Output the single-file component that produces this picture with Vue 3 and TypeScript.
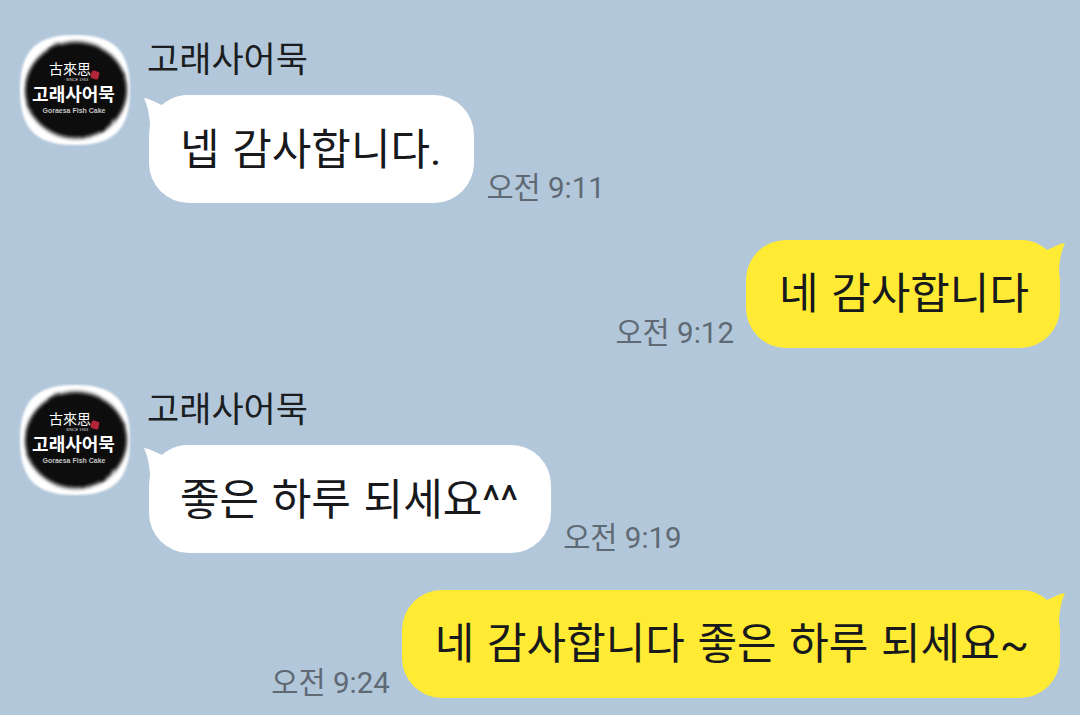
<script setup lang="ts">
interface Message {
  id: number;
  mine: boolean;
  text: string;
  time: string;
}

const sender = '고래사어묵';

const messages: Message[] = [
  { id: 1, mine: false, text: '넵 감사합니다.', time: '오전 9:11' },
  { id: 2, mine: true, text: '네 감사합니다', time: '오전 9:12' },
  { id: 3, mine: false, text: '좋은 하루 되세요^^', time: '오전 9:19' },
  { id: 4, mine: true, text: '네 감사합니다 좋은 하루 되세요~', time: '오전 9:24' },
];
</script>

<template>
  <main class="chat">
    <div v-for="msg in messages" :key="msg.id" class="row" :class="{ mine: msg.mine }">
      <svg v-if="!msg.mine" class="avatar" viewBox="0 0 112 112" aria-hidden="true">
        <defs>
          <filter :id="`brush-${msg.id}`" x="-15%" y="-15%" width="130%" height="130%">
            <feTurbulence type="fractalNoise" baseFrequency="0.05" numOctaves="3" seed="4" />
            <feDisplacementMap in="SourceGraphic" scale="3" />
            <feGaussianBlur stdDeviation="1.5" />
          </filter>
          <filter :id="`edge-${msg.id}`" x="-5%" y="-5%" width="110%" height="110%">
            <feGaussianBlur stdDeviation="0.8" />
          </filter>
        </defs>
        <path d="M56 1C90 1 111 12 111 56C111 100 90 111 56 111C22 111 1 100 1 56C1 12 22 1 56 1Z" fill="#fff" :filter="`url(#edge-${msg.id})`" />
        <ellipse cx="57" cy="56" rx="52" ry="50" fill="#a2a2a4" :filter="`url(#brush-${msg.id})`" />
        <ellipse cx="57" cy="56" rx="50" ry="47" fill="#0a0a0b" :filter="`url(#brush-${msg.id})`" />
        <text x="51" y="40" class="logo-han">古來思</text>
        <text x="58" y="46.5" class="logo-since">· SINCE 1963 ·</text>
        <rect x="72" y="37" width="8" height="8" rx="2" fill="#b3263a" transform="rotate(15 76 41)" />
        <text x="54.5" y="67" class="logo-name">고래사어묵</text>
        <text x="55" y="79" class="logo-en">Goraesa Fish Cake</text>
      </svg>

      <div class="body">
        <div v-if="!msg.mine" class="name">{{ sender }}</div>
        <div class="line">
          <span v-if="msg.mine" class="time">{{ msg.time }}</span>
          <div class="bubble">
            <svg class="tail" viewBox="0 0 52 46" aria-hidden="true">
              <path v-if="msg.mine" d="M51 3C44 4 38 8 33 10C26 4 18 0 6 0L6 46L45 46C44 28 46 14 51 3Z" />
              <path v-else d="M1 3C8 4 14 8 19 10C26 4 34 0 46 0L46 46L7 46C8 28 6 14 1 3Z" />
            </svg>
            <span class="text">{{ msg.text }}</span>
          </div>
          <span v-if="!msg.mine" class="time">{{ msg.time }}</span>
        </div>
      </div>
    </div>
  </main>
</template>

<style>
html,
body {
  margin: 0;
  background: #b2c7da;
}
</style>

<style scoped>
.chat {
  height: 715px;
  box-sizing: border-box;
  padding: 34px 20px 0 19px;
  overflow: hidden;
  background: #b2c7da;
  font-family: Roboto, "Noto Sans CJK KR", sans-serif;
  display: flex;
  flex-direction: column;
  gap: 36.67px;
}

.row {
  display: flex;
  align-items: flex-start;
}

.row.mine {
  justify-content: flex-end;
}

.avatar {
  width: 112px;
  height: 112px;
  flex: none;
  margin-right: 18px;
}

.logo-han {
  font-family: "Noto Sans CJK KR", sans-serif;
  font-size: 14px;
  fill: #fff;
  text-anchor: middle;
}

.logo-since {
  font-family: "Liberation Sans", sans-serif;
  font-size: 4px;
  fill: #ddd;
  text-anchor: middle;
}

.logo-name {
  font-family: "Noto Sans CJK KR", sans-serif;
  font-size: 18px;
  font-weight: 700;
  fill: #fff;
  text-anchor: middle;
}

.logo-en {
  font-family: "Liberation Sans", sans-serif;
  font-size: 7px;
  font-weight: 700;
  fill: #c4c4c4;
  text-anchor: middle;
}

.name {
  height: 58px;
  padding-top: 3px;
  margin-left: -2px;
  font-size: 35px;
  line-height: 48px;
  color: #1b1d20;
}

.line {
  display: flex;
  align-items: flex-end;
}

.bubble {
  position: relative;
  height: 108px;
  box-sizing: border-box;
  padding: 0 33px 7px 31px;
  display: flex;
  align-items: center;
  border-radius: 40px;
  background: #fff;
  font-size: 43px;
  word-spacing: 2px;
  color: #17191c;
  white-space: nowrap;
}

.mine .bubble {
  padding: 0 31px 7px 33px;
  background: #ffeb33;
}

.tail {
  position: absolute;
  top: 0;
  left: -6px;
  width: 52px;
  height: 46px;
  fill: #fff;
}

.mine .tail {
  left: auto;
  right: -6px;
  fill: #ffeb33;
}

.text {
  position: relative;
}

.time {
  font-size: 29.5px;
  line-height: 34px;
  margin: 0 12px -2px;
  color: #5f6a74;
  white-space: nowrap;
}
</style>
